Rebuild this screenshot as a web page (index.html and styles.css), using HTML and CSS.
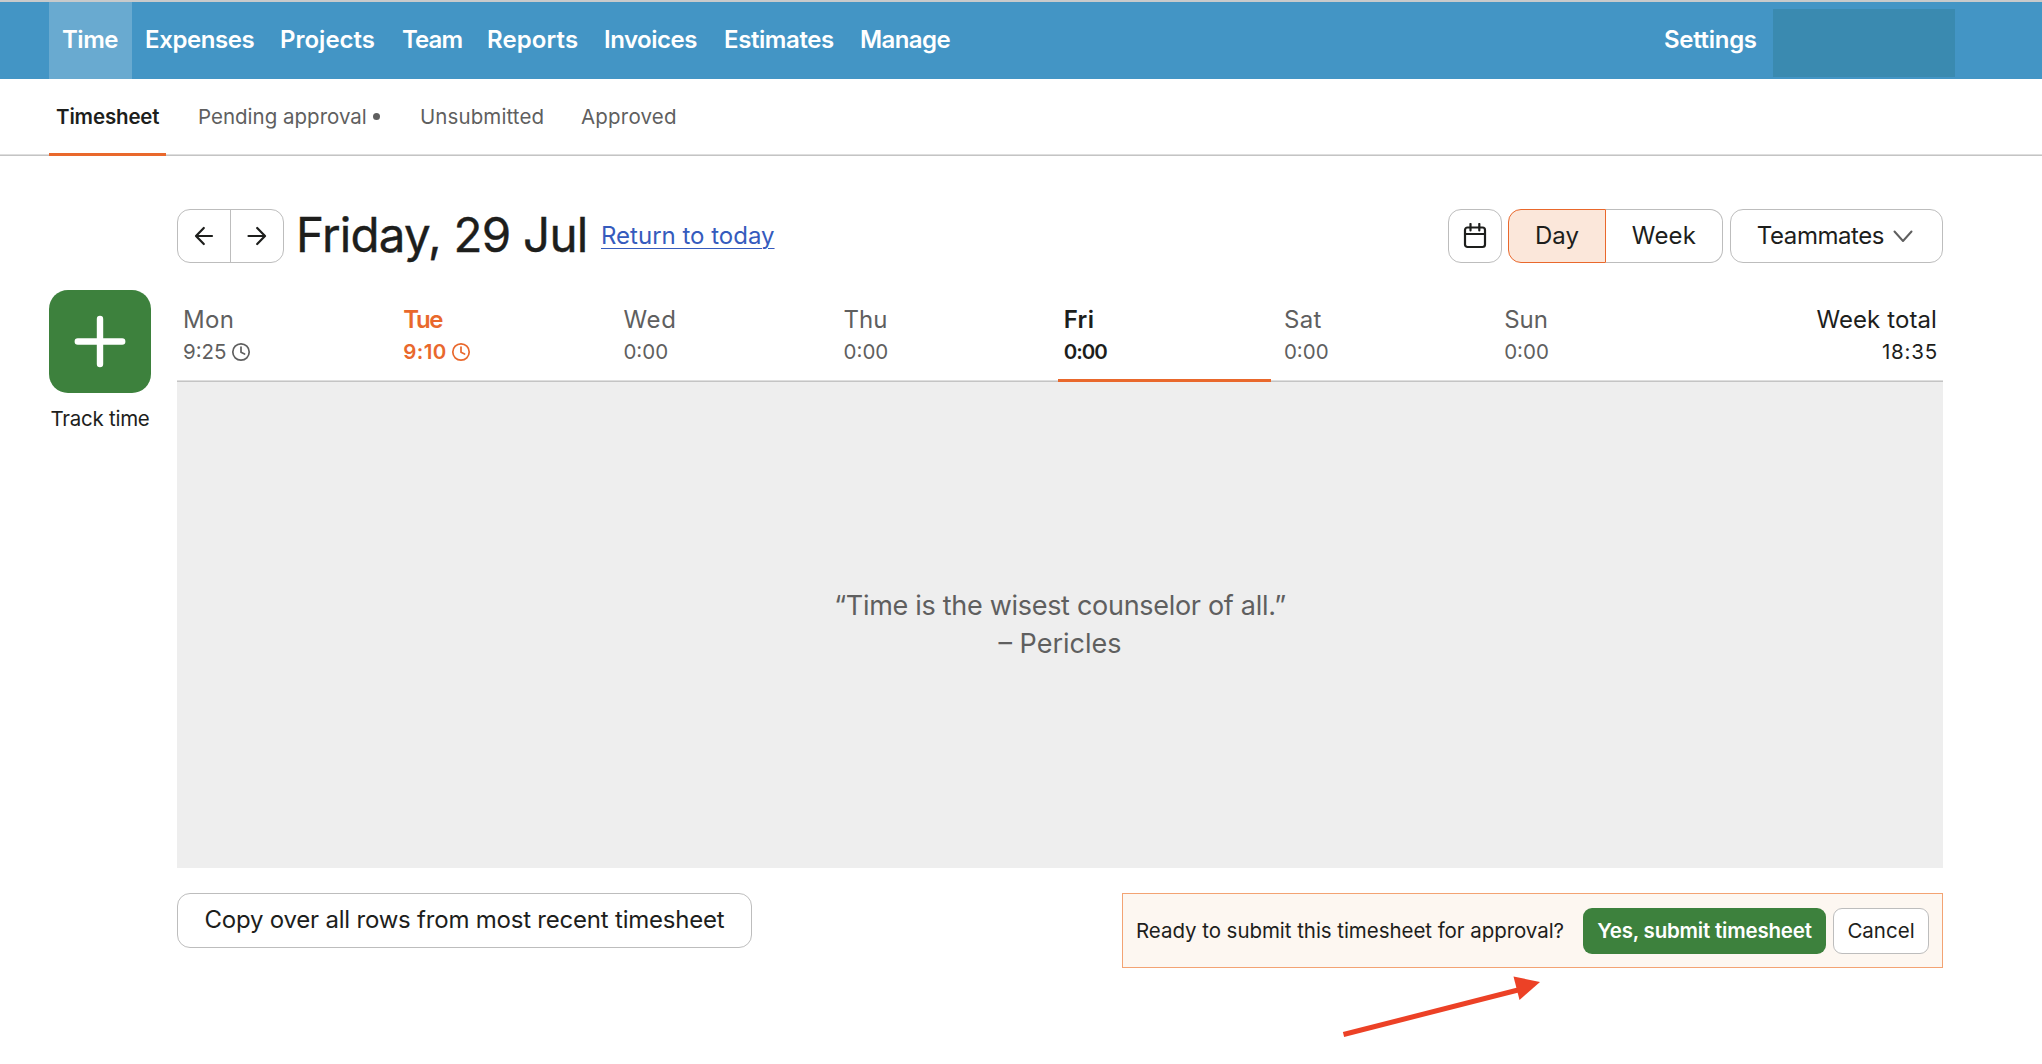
FILE: index.html
```html
<!DOCTYPE html>
<html lang="en">
<head>
<meta charset="utf-8">
<title>Timesheet</title>
<link rel="stylesheet" href="styles.css">
</head>
<body>
<header class="topbar">
  <nav class="topnav">
    <a class="topnav-item is-active nav-time">Time</a>
    <a class="topnav-item nav-expenses">Expenses</a>
    <a class="topnav-item nav-projects">Projects</a>
    <a class="topnav-item nav-team">Team</a>
    <a class="topnav-item nav-reports">Reports</a>
    <a class="topnav-item nav-invoices">Invoices</a>
    <a class="topnav-item nav-estimates">Estimates</a>
    <a class="topnav-item nav-manage">Manage</a>
  </nav>
  <div class="account">
    <a class="topnav-item nav-settings">Settings</a>
    <div class="account-name"></div>
  </div>
</header>
<nav class="subnav">
  <a class="subnav-item is-active">Timesheet</a>
  <a class="subnav-item sub-pending">Pending approval<span class="dot"></span></a>
  <a class="subnav-item sub-unsubmitted">Unsubmitted</a>
  <a class="subnav-item sub-approved">Approved</a>
</nav>
<main class="page">
  <aside class="track">
    <button class="track-button" aria-label="Track time">
      <svg width="102" height="103" viewBox="0 0 102 103"><path d="M51 29V74M28.800 51.500H73.200" stroke="#fff" stroke-width="6.400" stroke-linecap="round"/></svg>
    </button>
    <div class="track-label">Track time</div>
  </aside>
  <section class="sheet">
    <div class="toolbar">
      <div class="pager">
        <button class="pager-button"><svg width="20" height="20" viewBox="0 0 20 20"><path d="M18 10H2.500M9.800 2L2 10L9.800 18" /></svg></button>
        <button class="pager-button"><svg width="20" height="20" viewBox="0 0 20 20"><path d="M1.500 10H17.500M10.200 2L18 10L10.200 18" /></svg></button>
      </div>
      <h1 class="title">Friday, 29 Jul</h1>
      <a class="return">Return to today</a>
      <div class="controls">
        <button class="control calendar"><svg width="24" height="26" viewBox="0 0 24 26"><rect x="2" y="4.500" width="20" height="19.500" rx="2.500"/><path d="M2 11H22M7.500 1V7.500M16.300 1V7.500"/></svg></button>
        <div class="segmented">
          <button class="control day">Day</button>
          <button class="control week">Week</button>
        </div>
        <button class="control teammates">Teammates<svg width="20" height="14" viewBox="0 0 20 14"><path d="M1.500 2.500L10 12L18.500 2.500"/></svg></button>
      </div>
    </div>
    <div class="days">
      <div class="day-cell"><div class="name mon">Mon</div><div class="hours">9:25<svg class="clock" width="20" height="20" viewBox="0 0 20 20"><circle cx="10" cy="10" r="8.200"/><path d="M10 5V10.300L13.600 12"/></svg></div></div>
      <div class="day-cell is-today"><div class="name">Tue</div><div class="hours">9:10<svg class="clock" width="20" height="20" viewBox="0 0 20 20"><circle cx="10" cy="10" r="8.200"/><path d="M10 5V10.300L13.600 12"/></svg></div></div>
      <div class="day-cell"><div class="name wed">Wed</div><div class="hours">0:00</div></div>
      <div class="day-cell"><div class="name">Thu</div><div class="hours">0:00</div></div>
      <div class="day-cell is-selected"><div class="name">Fri</div><div class="hours">0:00</div></div>
      <div class="day-cell"><div class="name sat">Sat</div><div class="hours">0:00</div></div>
      <div class="day-cell"><div class="name">Sun</div><div class="hours">0:00</div></div>
      <div class="day-cell total"><div class="name">Week total</div><div class="hours">18:35</div></div>
    </div>
    <div class="empty">
      <p class="quote">“Time is the wisest counselor of all.”</p>
      <p class="author">– Pericles</p>
    </div>
    <div class="footer">
      <button class="control copy">Copy over all rows from most recent timesheet</button>
      <div class="approval">
        <span class="approval-text">Ready to submit this timesheet for approval?</span>
        <button class="submit">Yes, submit timesheet</button>
        <button class="cancel">Cancel</button>
      </div>
    </div>
  </section>
</main>
<svg class="pointer" width="204" height="64" viewBox="0 0 204 64"><path d="M3.500 58.500L180 13.500" stroke="#ec4126" stroke-width="5"/><path d="M173.500 0.500L200 6L179.500 24Z" fill="#ec4126"/></svg>
</body>
</html>
```
FILE: styles.css
```css
* { box-sizing: border-box; }
body {
  margin: 0;
  height: 1064px;
  overflow: hidden;
  background: #fff;
  color: #1d1e1c;
  font-family: Inter, "Liberation Sans", sans-serif;
  font-size: 24px;
}
button {
  margin: 0;
  padding: 0;
  border: 0;
  font: inherit;
  color: inherit;
  background: none;
}
svg { display: block; fill: none; flex: none; }

/* Top navigation */
.topbar {
  display: flex;
  justify-content: space-between;
  height: 79px;
  padding: 0 87px 0 49px;
  border-top: 2px solid #c8cacb;
  background: #4395c5;
  color: #fff;
}
.topnav, .account { display: flex; }
.topnav-item {
  display: flex;
  align-items: center;
  padding: 0 0 2px 13px;
  font-weight: 600;
  letter-spacing: -0.4px;
  white-space: nowrap;
}
.topnav-item.is-active { background: #69aad0; }
.nav-time { width: 83px; letter-spacing: -0.5px; }
.nav-expenses { width: 135px; }
.nav-projects { width: 122px; letter-spacing: 0; }
.nav-team { width: 85px; letter-spacing: -0.9px; }
.nav-reports { width: 117px; letter-spacing: 0.1px; }
.nav-invoices { width: 120px; letter-spacing: -0.5px; }
.nav-estimates { width: 136px; }
.nav-manage { width: 110px; letter-spacing: -0.6px; }
.nav-settings { width: 122px; letter-spacing: -0.3px; }
.account-name { width: 182px; height: 68px; margin-top: 7px; background: #3a8ab0; }

/* Section tabs */
.subnav {
  display: flex;
  gap: 25px;
  height: 77px;
  padding-left: 49px;
  border-bottom: 1px solid #c4c4c4;
  box-shadow: inset 0 -1px #dedede;
  color: #5f5f5f;
  font-size: 20.5px;
}
.subnav-item {
  display: flex;
  align-items: center;
  height: 77px;
  padding: 0 7px 2px 7px;
}
.subnav-item.is-active {
  width: 117px;
  padding-top: 3px;
  border-bottom: 3px solid #e9682c;
  color: #1d1e1c;
  font-weight: 600;
  letter-spacing: -0.15px;
}
.sub-pending { width: 197px; }
.sub-unsubmitted { width: 136px; letter-spacing: 0.1px; }
.sub-approved { letter-spacing: 0.2px; }
.dot { width: 7px; height: 7px; margin: 0 0 1px 6px; border-radius: 50%; background: #5f5f5f; }

/* Page */
.page {
  display: flex;
  gap: 26px;
  padding: 53px 99px 0 49px;
}
.track { width: 102px; padding-top: 81px; }
.track-button { display: block; border-radius: 19px; background: #3d813d; }
.track-label {
  margin-top: 13px;
  font-size: 20.5px;
  line-height: 26px;
  letter-spacing: -0.25px;
  text-align: center;
  white-space: nowrap;
}
.sheet { width: 1766px; }

.toolbar { display: flex; align-items: center; height: 54px; }
.pager {
  display: flex;
  width: 107px;
  height: 54px;
  border: 1px solid #bdbdbd;
  border-radius: 13px;
}
.pager-button { flex: 1; display: grid; place-items: center; }
.pager-button + .pager-button { border-left: 1px solid #bdbdbd; }
.pager svg { stroke: #1d1e1c; stroke-width: 2.2; stroke-linecap: round; stroke-linejoin: round; }
.title {
  width: 304px;
  margin: 0;
  padding: 0 0 2px 12px;
  font-size: 47.5px;
  font-weight: 400;
  line-height: 52px;
  letter-spacing: -0.75px;
  white-space: nowrap;
  -webkit-text-stroke: 0.4px #1d1e1c;
}
.return {
  margin-left: 13px;
  padding-bottom: 2px;
  color: #355bbd;
  line-height: 27px;
  text-decoration: underline;
  text-decoration-thickness: 1px;
  text-underline-offset: 4px;
}
.controls { display: flex; gap: 7px; margin-left: auto; }
.control {
  display: flex;
  align-items: center;
  justify-content: center;
  height: 54px;
  padding-bottom: 2px;
  border: 1px solid #bdbdbd;
  border-radius: 13px;
}
.calendar { width: 54px; margin-right: -1px; padding: 0; }
.calendar svg { stroke: #1d1e1c; stroke-width: 2.2; stroke-linecap: round; }
.segmented { display: flex; width: 215px; }
.day { width: 98px; border-color: #e9682c; border-radius: 13px 0 0 13px; background: #fbe7da; }
.week { flex: 1; border-left: 0; border-radius: 0 13px 13px 0; letter-spacing: 0.2px; }
.teammates { width: 213px; gap: 9px; padding-right: 3px; letter-spacing: -0.43px; }
.teammates svg { margin-top: 2px; stroke: #5f5f5f; stroke-width: 2; stroke-linecap: round; stroke-linejoin: round; }

/* Week strip */
.days {
  display: grid;
  grid-template-columns: repeat(7, 213.2px) 1fr;
  column-gap: 7px;
  height: 119px;
  border-bottom: 1px solid #c4c4c4;
  box-shadow: inset 0 -1px #dedede;
  color: #5f5f5f;
}
.day-cell { height: 119px; padding: 41px 6px 0; }
.name { line-height: 32px; }
.mon { letter-spacing: 0.3px; }
.wed { letter-spacing: 0.7px; }
.sat { letter-spacing: 0.4px; }
.hours { display: flex; align-items: center; font-size: 20.5px; line-height: 32px; }
.clock { margin-left: 4px; stroke: currentColor; stroke-width: 1.7; stroke-linecap: round; stroke-linejoin: round; }
.is-today { color: #e9682c; font-weight: 600; }
.is-today .name { letter-spacing: -1.3px; }
.is-today .hours { letter-spacing: 0.4px; }
.is-selected { border-bottom: 3px solid #e9682c; color: #1d1e1c; font-weight: 600; }
.is-selected .name { letter-spacing: 0.3px; }
.is-selected .hours { letter-spacing: -1px; }
.total { color: #1d1e1c; text-align: right; letter-spacing: 0.1px; }
.total .hours { justify-content: flex-end; letter-spacing: 0.8px; margin-right: -1px; }

.empty {
  display: flex;
  flex-direction: column;
  justify-content: center;
  height: 486px;
  background: #eee;
  color: #5f5f5f;
  font-size: 27px;
  line-height: 38px;
  text-align: center;
}
.empty p { margin: 0; }
.quote { letter-spacing: -0.3px; }

/* Footer */
.footer { display: flex; justify-content: space-between; align-items: flex-start; margin-top: 25px; }
.copy { width: 575px; height: 55px; letter-spacing: -0.21px; }
.approval {
  display: flex;
  align-items: center;
  width: 821px;
  height: 75px;
  padding: 0 13px;
  border: 1px solid #f3a373;
  background: #fdf7f1;
  font-size: 20.5px;
  white-space: nowrap;
}
.approval-text { width: 447px; letter-spacing: -0.05px; }
.submit {
  width: 243px;
  height: 46px;
  border-radius: 9px;
  background: #3d813d;
  color: #fff;
  font-weight: 600;
  letter-spacing: -0.2px;
}
.cancel {
  width: 96px;
  height: 46px;
  margin-left: 7px;
  border: 1px solid #bdbdbd;
  border-radius: 9px;
  background: #fff;
}

/* Callout arrow over the page */
.pointer { position: absolute; left: 1340px; top: 976px; }
```
